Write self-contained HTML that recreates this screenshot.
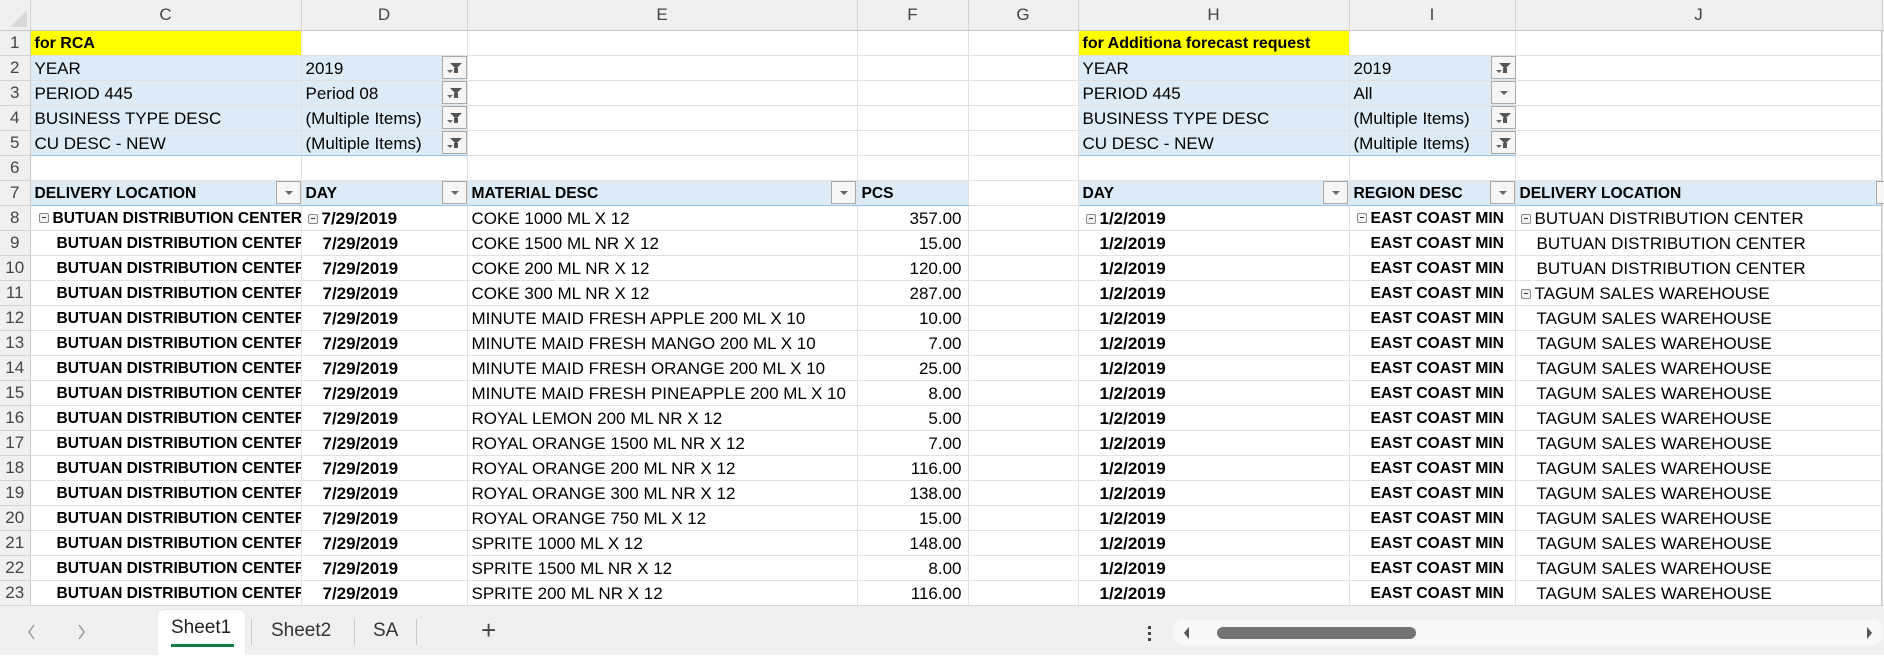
<!DOCTYPE html>
<html><head><meta charset="utf-8"><style>
*{margin:0;padding:0;box-sizing:border-box}
body{width:1884px;height:655px;overflow:hidden;background:#fff;font-family:"Liberation Sans",sans-serif;font-size:17px;color:#000;position:relative}
table{position:absolute;left:0;top:0;border-collapse:collapse;table-layout:fixed;width:1884px}
tr{height:25px}
td{height:25px;max-height:25px;border-right:1px solid #e1e1e1;border-bottom:1px solid #e1e1e1;white-space:nowrap;overflow:hidden;padding:0 0 0 4px;line-height:22px;vertical-align:bottom}
tr.h{height:30px}
tr.h td{height:30px;background:#f0f0f0;color:#444;text-align:center;font-size:17px;padding:0;border-right:1px solid #d4d4d4;border-bottom:1px solid #c8c8c8;vertical-align:middle}
td.r{background:#f0f0f0;color:#444;text-align:center;padding:0;font-size:17px;border-right:1px solid #c8c8c8;border-bottom:1px solid #d4d4d4;vertical-align:middle}
td.x{border:none;background:#fff}
tr.h td.x{background:#f0f0f0}
.y{background:#ffff00;font-weight:bold;font-size:16px}
.b{background:#ddebf7}
.bb{border-bottom:1px solid #9bc2e6}
.bo{font-weight:bold;font-size:15.6px}
.dt{font-size:17px}
.n{text-align:right;padding-right:6px}
.i1{padding-left:26px}
.i2{padding-left:21px}
.m{display:inline-block;width:10px;height:10px;border:1px solid #8a8a8a;border-radius:2px;background:#f3f3f3;position:relative;margin-right:4px;vertical-align:0}
.m:after{content:"";position:absolute;left:2px;right:2px;top:3px;height:1px;background:#333}
.btn{position:absolute;width:25px;height:23px;border:1px solid #a9a9a9;background:#f6f6f6}
.f:before{content:"";position:absolute;left:7px;top:6px;border-left:6px solid transparent;border-right:6px solid transparent;border-top:6px solid #555}
.f:after{content:"";position:absolute;left:11px;top:11px;width:4px;height:5px;background:#555}
.d:before{content:"";position:absolute;left:8px;top:9px;border-left:4px solid transparent;border-right:4px solid transparent;border-top:4px solid #666}
.f i{position:absolute;left:4px;top:13px;border-left:3px solid transparent;border-right:3px solid transparent;border-top:3px solid #666}
.tabs{position:absolute;left:0;top:605px;width:1884px;height:50px;background:#f0f0f0;border-top:1px solid #d8d8d8}
.t{position:absolute;font-size:19px;color:#333;top:14px}
.sep{position:absolute;top:13px;width:1px;height:26px;background:#c8c8c8}
</style></head><body>
<table>
<colgroup><col style="width:30px"><col style="width:271px"><col style="width:166px"><col style="width:390px"><col style="width:111px"><col style="width:110px"><col style="width:271px"><col style="width:166px"><col style="width:367px"><col style="width:2px"></colgroup>
<tr class="h"><td></td><td>C</td><td>D</td><td>E</td><td>F</td><td>G</td><td>H</td><td>I</td><td>J</td><td class="x"></td></tr>
<tr><td class="r">1</td><td class="y">for RCA</td><td></td><td></td><td></td><td></td><td class="y">for Additiona forecast request</td><td></td><td></td><td class="x"></td></tr>
<tr><td class="r">2</td><td class="b">YEAR</td><td class="b">2019</td><td></td><td></td><td></td><td class="b">YEAR</td><td class="b">2019</td><td></td><td class="x"></td></tr>
<tr><td class="r">3</td><td class="b">PERIOD 445</td><td class="b">Period 08</td><td></td><td></td><td></td><td class="b">PERIOD 445</td><td class="b">All</td><td></td><td class="x"></td></tr>
<tr><td class="r">4</td><td class="b">BUSINESS TYPE DESC</td><td class="b">(Multiple Items)</td><td></td><td></td><td></td><td class="b">BUSINESS TYPE DESC</td><td class="b">(Multiple Items)</td><td></td><td class="x"></td></tr>
<tr><td class="r">5</td><td class="b bb">CU DESC - NEW</td><td class="b bb">(Multiple Items)</td><td></td><td></td><td></td><td class="b bb">CU DESC - NEW</td><td class="b bb">(Multiple Items)</td><td></td><td class="x"></td></tr>
<tr><td class="r">6</td><td></td><td></td><td></td><td></td><td></td><td></td><td></td><td></td><td class="x"></td></tr>
<tr><td class="r">7</td><td class="b bb bo">DELIVERY LOCATION</td><td class="b bb bo">DAY</td><td class="b bb bo">MATERIAL DESC</td><td class="b bb bo">PCS</td><td></td><td class="b bb bo">DAY</td><td class="b bb bo">REGION DESC</td><td class="b bb bo">DELIVERY LOCATION</td><td class="x"></td></tr>
<tr><td class="r">8</td><td class="bo" style="padding-left:8px"><span class="m"></span>BUTUAN DISTRIBUTION CENTER</td><td class="bo dt" style="padding-left:6px"><span class="m"></span>7/29/2019</td><td>COKE 1000 ML X 12</td><td class="n">357.00</td><td></td><td class="bo dt" style="padding-left:7px"><span class="m"></span>1/2/2019</td><td class="bo" style="padding-left:7px"><span class="m"></span>EAST COAST MIN</td><td style="padding-left:5px"><span class="m"></span>BUTUAN DISTRIBUTION CENTER</td><td class="x"></td></tr>
<tr><td class="r">9</td><td class="bo i1">BUTUAN DISTRIBUTION CENTER</td><td class="bo dt i2">7/29/2019</td><td>COKE 1500 ML NR X 12</td><td class="n">15.00</td><td></td><td class="bo dt i2">1/2/2019</td><td class="bo i2">EAST COAST MIN</td><td class="i2">BUTUAN DISTRIBUTION CENTER</td><td class="x"></td></tr>
<tr><td class="r">10</td><td class="bo i1">BUTUAN DISTRIBUTION CENTER</td><td class="bo dt i2">7/29/2019</td><td>COKE 200 ML NR X 12</td><td class="n">120.00</td><td></td><td class="bo dt i2">1/2/2019</td><td class="bo i2">EAST COAST MIN</td><td class="i2">BUTUAN DISTRIBUTION CENTER</td><td class="x"></td></tr>
<tr><td class="r">11</td><td class="bo i1">BUTUAN DISTRIBUTION CENTER</td><td class="bo dt i2">7/29/2019</td><td>COKE 300 ML NR X 12</td><td class="n">287.00</td><td></td><td class="bo dt i2">1/2/2019</td><td class="bo i2">EAST COAST MIN</td><td style="padding-left:5px"><span class="m"></span>TAGUM SALES WAREHOUSE</td><td class="x"></td></tr>
<tr><td class="r">12</td><td class="bo i1">BUTUAN DISTRIBUTION CENTER</td><td class="bo dt i2">7/29/2019</td><td>MINUTE MAID FRESH APPLE 200 ML X 10</td><td class="n">10.00</td><td></td><td class="bo dt i2">1/2/2019</td><td class="bo i2">EAST COAST MIN</td><td class="i2">TAGUM SALES WAREHOUSE</td><td class="x"></td></tr>
<tr><td class="r">13</td><td class="bo i1">BUTUAN DISTRIBUTION CENTER</td><td class="bo dt i2">7/29/2019</td><td>MINUTE MAID FRESH MANGO 200 ML X 10</td><td class="n">7.00</td><td></td><td class="bo dt i2">1/2/2019</td><td class="bo i2">EAST COAST MIN</td><td class="i2">TAGUM SALES WAREHOUSE</td><td class="x"></td></tr>
<tr><td class="r">14</td><td class="bo i1">BUTUAN DISTRIBUTION CENTER</td><td class="bo dt i2">7/29/2019</td><td>MINUTE MAID FRESH ORANGE 200 ML X 10</td><td class="n">25.00</td><td></td><td class="bo dt i2">1/2/2019</td><td class="bo i2">EAST COAST MIN</td><td class="i2">TAGUM SALES WAREHOUSE</td><td class="x"></td></tr>
<tr><td class="r">15</td><td class="bo i1">BUTUAN DISTRIBUTION CENTER</td><td class="bo dt i2">7/29/2019</td><td>MINUTE MAID FRESH PINEAPPLE 200 ML X 10</td><td class="n">8.00</td><td></td><td class="bo dt i2">1/2/2019</td><td class="bo i2">EAST COAST MIN</td><td class="i2">TAGUM SALES WAREHOUSE</td><td class="x"></td></tr>
<tr><td class="r">16</td><td class="bo i1">BUTUAN DISTRIBUTION CENTER</td><td class="bo dt i2">7/29/2019</td><td>ROYAL LEMON 200 ML NR X 12</td><td class="n">5.00</td><td></td><td class="bo dt i2">1/2/2019</td><td class="bo i2">EAST COAST MIN</td><td class="i2">TAGUM SALES WAREHOUSE</td><td class="x"></td></tr>
<tr><td class="r">17</td><td class="bo i1">BUTUAN DISTRIBUTION CENTER</td><td class="bo dt i2">7/29/2019</td><td>ROYAL ORANGE 1500 ML NR X 12</td><td class="n">7.00</td><td></td><td class="bo dt i2">1/2/2019</td><td class="bo i2">EAST COAST MIN</td><td class="i2">TAGUM SALES WAREHOUSE</td><td class="x"></td></tr>
<tr><td class="r">18</td><td class="bo i1">BUTUAN DISTRIBUTION CENTER</td><td class="bo dt i2">7/29/2019</td><td>ROYAL ORANGE 200 ML NR X 12</td><td class="n">116.00</td><td></td><td class="bo dt i2">1/2/2019</td><td class="bo i2">EAST COAST MIN</td><td class="i2">TAGUM SALES WAREHOUSE</td><td class="x"></td></tr>
<tr><td class="r">19</td><td class="bo i1">BUTUAN DISTRIBUTION CENTER</td><td class="bo dt i2">7/29/2019</td><td>ROYAL ORANGE 300 ML NR X 12</td><td class="n">138.00</td><td></td><td class="bo dt i2">1/2/2019</td><td class="bo i2">EAST COAST MIN</td><td class="i2">TAGUM SALES WAREHOUSE</td><td class="x"></td></tr>
<tr><td class="r">20</td><td class="bo i1">BUTUAN DISTRIBUTION CENTER</td><td class="bo dt i2">7/29/2019</td><td>ROYAL ORANGE 750 ML X 12</td><td class="n">15.00</td><td></td><td class="bo dt i2">1/2/2019</td><td class="bo i2">EAST COAST MIN</td><td class="i2">TAGUM SALES WAREHOUSE</td><td class="x"></td></tr>
<tr><td class="r">21</td><td class="bo i1">BUTUAN DISTRIBUTION CENTER</td><td class="bo dt i2">7/29/2019</td><td>SPRITE 1000 ML X 12</td><td class="n">148.00</td><td></td><td class="bo dt i2">1/2/2019</td><td class="bo i2">EAST COAST MIN</td><td class="i2">TAGUM SALES WAREHOUSE</td><td class="x"></td></tr>
<tr><td class="r">22</td><td class="bo i1">BUTUAN DISTRIBUTION CENTER</td><td class="bo dt i2">7/29/2019</td><td>SPRITE 1500 ML NR X 12</td><td class="n">8.00</td><td></td><td class="bo dt i2">1/2/2019</td><td class="bo i2">EAST COAST MIN</td><td class="i2">TAGUM SALES WAREHOUSE</td><td class="x"></td></tr>
<tr><td class="r">23</td><td class="bo i1">BUTUAN DISTRIBUTION CENTER</td><td class="bo dt i2">7/29/2019</td><td>SPRITE 200 ML NR X 12</td><td class="n">116.00</td><td></td><td class="bo dt i2">1/2/2019</td><td class="bo i2">EAST COAST MIN</td><td class="i2">TAGUM SALES WAREHOUSE</td><td class="x"></td></tr>
</table>
<div style="position:absolute;left:0;top:0;width:30px;height:30px;background:#f0f0f0"></div>
<div style="position:absolute;left:10px;top:10px;width:0;height:0;border-left:17px solid transparent;border-bottom:17px solid #dadada"></div>
<div style="position:absolute;left:1881px;top:30px;width:1px;height:575px;background:#c8c8c8"></div>

<div class="btn f" style="left:442px;top:56px"><i></i></div>
<div class="btn f" style="left:442px;top:81px"><i></i></div>
<div class="btn f" style="left:442px;top:106px"><i></i></div>
<div class="btn f" style="left:442px;top:131px"><i></i></div>
<div class="btn f" style="left:1491px;top:56px"><i></i></div>
<div class="btn d" style="left:1491px;top:81px"></div>
<div class="btn f" style="left:1491px;top:106px"><i></i></div>
<div class="btn f" style="left:1491px;top:131px"><i></i></div>
<div class="btn d" style="left:276px;top:181px"></div>
<div class="btn d" style="left:442px;top:181px"></div>
<div class="btn d" style="left:831px;top:181px"></div>
<div class="btn d" style="left:1323px;top:181px"></div>
<div class="btn d" style="left:1490px;top:181px"></div>
<div class="btn" style="left:1876px;top:181px"></div>

<div class="tabs">
<svg style="position:absolute;left:26px;top:16px" width="12" height="20"><path d="M8 3 L3 10 L8 17" stroke="#999" stroke-width="1.5" fill="none"/></svg>
<svg style="position:absolute;left:75px;top:16px" width="12" height="20"><path d="M4 3 L9 10 L4 17" stroke="#999" stroke-width="1.5" fill="none"/></svg>
<div style="position:absolute;left:158px;top:4px;width:87px;height:46px;background:#fff;border-radius:6px 6px 0 0;box-shadow:0 0 1px #ccc"></div>
<div class="t" style="left:171px;top:11px;color:#222">Sheet1</div>
<div style="position:absolute;left:171px;top:38px;width:63px;height:3px;background:#107c41"></div>
<div class="sep" style="left:251px"></div>
<div class="t" style="left:271px">Sheet2</div>
<div class="sep" style="left:354px"></div>
<div class="t" style="left:373px">SA</div>
<div class="sep" style="left:416px"></div>
<div class="t" style="left:481px;top:9px;font-size:26px;font-weight:300;color:#444">+</div>
<div style="position:absolute;left:1148px;top:20px;width:3px;height:3px;background:#444;box-shadow:0 6px 0 #444,0 12px 0 #444"></div>
<div style="position:absolute;left:1174px;top:14px;width:708px;height:25px;background:#f8f8f8;border-radius:8px"></div>
<div style="position:absolute;left:1184px;top:21px;border-top:6px solid transparent;border-bottom:6px solid transparent;border-right:5px solid #555"></div>
<div style="position:absolute;left:1217px;top:21px;width:199px;height:12px;background:#737373;border-radius:6px"></div>
<div style="position:absolute;left:1867px;top:21px;border-top:6px solid transparent;border-bottom:6px solid transparent;border-left:5px solid #555"></div>
</div>
</body></html>
